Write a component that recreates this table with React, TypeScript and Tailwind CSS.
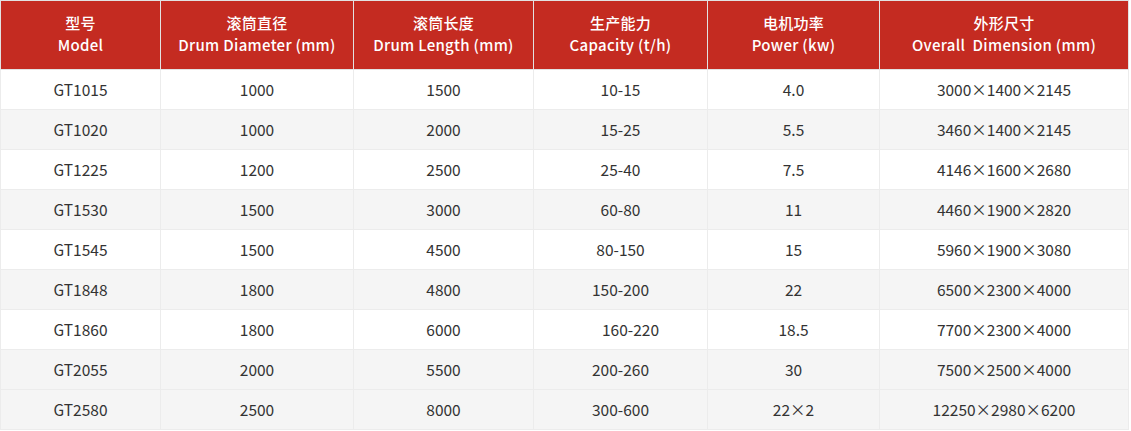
import React from "react";

const headers = [
  { zh: "型号", en: "Model", w: "w-[160px]" },
  { zh: "滚筒直径", en: "Drum Diameter (mm)", w: "w-[193px]" },
  { zh: "滚筒长度", en: "Drum Length (mm)", w: "w-[180px]" },
  { zh: "生产能力", en: "Capacity (t/h)", w: "w-[174px]" },
  { zh: "电机功率", en: "Power (kw)", w: "w-[172px]" },
  { zh: "外形尺寸", en: "Overall  Dimension (mm)", w: "w-[249px]" },
];

const rows = [
  ["GT1015", "1000", "1500", "10-15", "4.0", "3000×1400×2145"],
  ["GT1020", "1000", "2000", "15-25", "5.5", "3460×1400×2145"],
  ["GT1225", "1200", "2500", "25-40", "7.5", "4146×1600×2680"],
  ["GT1530", "1500", "3000", "60-80", "11", "4460×1900×2820"],
  ["GT1545", "1500", "4500", "80-150", "15", "5960×1900×3080"],
  ["GT1848", "1800", "4800", "150-200", "22", "6500×2300×4000"],
  ["GT1860", "1800", "6000", "160-220", "18.5", "7700×2300×4000"],
  ["GT2055", "2000", "5500", "200-260", "30", "7500×2500×4000"],
  ["GT2580", "2500", "8000", "300-600", "22×2", "12250×2980×6200"],
];

export default function App() {
  return (
    <div className="w-[1131px] h-[431px] bg-white overflow-hidden font-['Noto_Sans_CJK_SC','Noto_Sans',sans-serif]">
      <table className="w-[1129px] table-fixed border-collapse text-center">
        <thead>
          <tr className="h-[69px] bg-[#c42b21] text-white">
            {headers.map((h) => (
              <th
                key={h.en}
                className={`${h.w} border border-[#e2e2e2] pb-[3px] text-[15px] leading-[22px] font-medium tracking-[0.3px] whitespace-pre`}
              >
                <div>{h.zh}</div>
                <div>{h.en}</div>
              </th>
            ))}
          </tr>
        </thead>
        <tbody>
          {rows.map((r, i) => (
            <tr
              key={r[0]}
              className={`h-[40px] ${i % 2 === 1 || i === rows.length - 1 ? "bg-[#f5f5f5]" : "bg-white"}`}
            >
              {r.map((c, j) => (
                <td
                  key={j}
                  className={`border border-[#ececec] text-[15.5px] text-[#333] whitespace-pre py-0 pr-0 ${
                    c === "160-220" ? "pl-[20px]" : "pl-0"
                  }`}
                >
                  {c}
                </td>
              ))}
            </tr>
          ))}
        </tbody>
      </table>
    </div>
  );
}
